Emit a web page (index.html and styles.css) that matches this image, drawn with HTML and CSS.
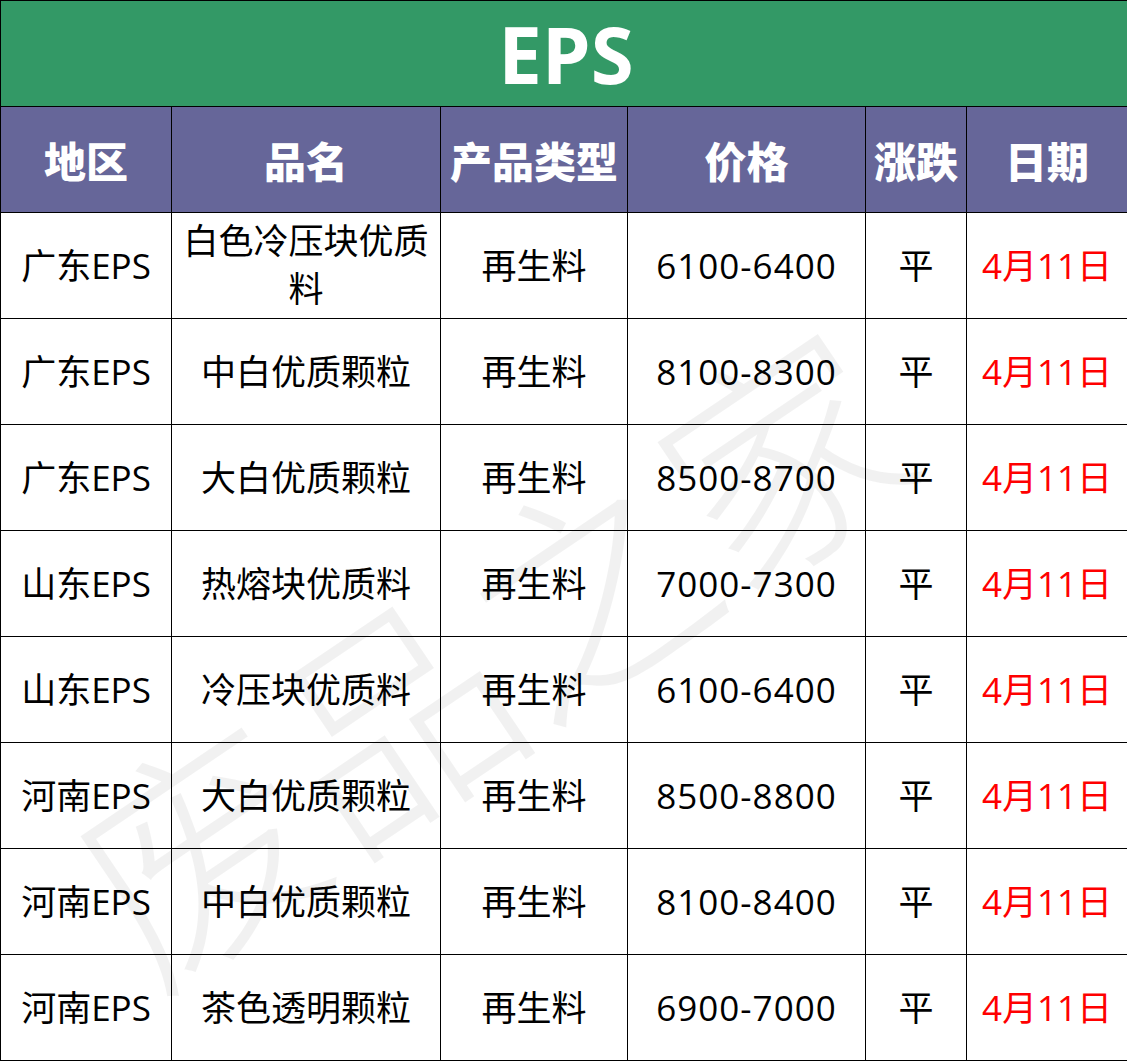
FILE: index.html
```html
<!DOCTYPE html>
<html lang="zh">
<head>
<meta charset="utf-8">
<link rel="stylesheet" href="styles.css">
</head>
<body>
<div class="sheet">
  <table class="price">
    <colgroup>
      <col class="c1"><col class="c2"><col class="c3"><col class="c4"><col class="c5"><col class="c6">
    </colgroup>
    <thead>
      <tr class="title"><th colspan="6">EPS</th></tr>
      <tr class="head">
        <th>地区</th><th>品名</th><th>产品类型</th><th>价格</th><th>涨跌</th><th>日期</th>
      </tr>
    </thead>
    <tbody>
      <tr><td>广东EPS</td><td class="name"><span class="two">白色冷压块优质<br>料</span></td><td>再生料</td><td class="num">6100-6400</td><td>平</td><td class="date">4月11日</td></tr>
      <tr><td>广东EPS</td><td>中白优质颗粒</td><td>再生料</td><td class="num">8100-8300</td><td>平</td><td class="date">4月11日</td></tr>
      <tr><td>广东EPS</td><td>大白优质颗粒</td><td>再生料</td><td class="num">8500-8700</td><td>平</td><td class="date">4月11日</td></tr>
      <tr><td>山东EPS</td><td>热熔块优质料</td><td>再生料</td><td class="num">7000-7300</td><td>平</td><td class="date">4月11日</td></tr>
      <tr><td>山东EPS</td><td>冷压块优质料</td><td>再生料</td><td class="num">6100-6400</td><td>平</td><td class="date">4月11日</td></tr>
      <tr><td>河南EPS</td><td>大白优质颗粒</td><td>再生料</td><td class="num">8500-8800</td><td>平</td><td class="date">4月11日</td></tr>
      <tr><td>河南EPS</td><td>中白优质颗粒</td><td>再生料</td><td class="num">8100-8400</td><td>平</td><td class="date">4月11日</td></tr>
      <tr><td>河南EPS</td><td>茶色透明颗粒</td><td>再生料</td><td class="num">6900-7000</td><td>平</td><td class="date">4月11日</td></tr>
    </tbody>
  </table>
  <div class="watermark">废品之家</div>
</div>
</body>
</html>
```

FILE: styles.css
```css
html, body {
  margin: 0;
  padding: 0;
  background: #ffffff;
}
.sheet {
  position: relative;
  width: 1127px;
  height: 1061px;
  overflow: hidden;
}
.price {
  border-collapse: collapse;
  table-layout: fixed;
  width: 1127px;
  font-family: "Open Sans", "Noto Sans CJK SC", sans-serif;
  color: #000;
}
.c1 { width: 171px; }
.c2 { width: 269px; }
.c3 { width: 187px; }
.c4 { width: 238px; }
.c5 { width: 101px; }
.c6 { width: 161px; }
.price th, .price td {
  border: 1px solid #000;
  text-align: center;
  vertical-align: middle;
  padding: 0;
  overflow: hidden;
}
.title th {
  height: 105px;
  background: #339966;
  color: #ffffff;
  font-family: "Open Sans", "Noto Sans CJK SC", sans-serif;
  font-weight: 700;
  font-size: 78px;
  line-height: 1;
  padding-left: 4px;
}
.head th {
  height: 105px;
  background: #666699;
  color: #ffffff;
  font-family: "Noto Sans CJK SC", sans-serif;
  font-weight: 900;
  font-size: 42px;
  line-height: 1;
}
.price td {
  height: 105px;
  font-size: 35px;
  line-height: 1;
  font-weight: 400;
  white-space: nowrap;
}
.price td.num {
  letter-spacing: 1px;
}
.two {
  display: block;
  font-family: "Noto Sans CJK SC", sans-serif;
  font-size: 35px;
  line-height: 48px;
  margin-top: -6px;
}
.price td.date {
  color: #ff0000;
}
.watermark {
  position: absolute;
  left: 95px;
  top: 790px;
  font-family: "Noto Sans CJK SC", serif;
  font-weight: 300;
  font-size: 235px;
  line-height: 1;
  color: rgba(0, 0, 0, 0.055);
  transform: rotate(-34deg);
  transform-origin: 0 50%;
  white-space: nowrap;
  pointer-events: none;
}
```
